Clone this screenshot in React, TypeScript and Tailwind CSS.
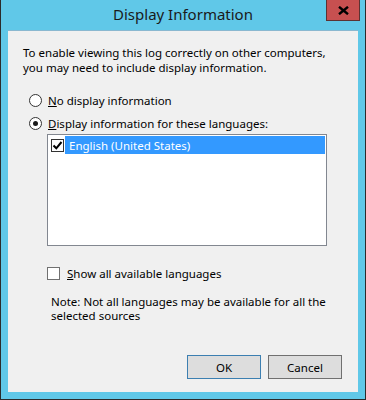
import { useState } from "react";

const font = { fontFamily: '"Noto Sans", "Open Sans", sans-serif' };

const Radio = ({ checked }: { checked: boolean }) => (
  <span className="w-[13px] h-[13px] rounded-full border border-[#333333] bg-white flex items-center justify-center shrink-0">
    {checked && <span className="w-[5px] h-[5px] rounded-full bg-[#1a1a1a]" />}
  </span>
);

const Check = ({ checked }: { checked: boolean }) => (
  <span className="w-[13px] h-[13px] border border-[#333333] bg-white flex items-center justify-center shrink-0">
    {checked && (
      <svg width="11" height="11" viewBox="0 0 11 11">
        <path d="M1.5 5.5 L4.3 8.3 L9.5 2" fill="none" stroke="#000" strokeWidth="2" />
      </svg>
    )}
  </span>
);

export default function App() {
  const [mode, setMode] = useState<"none" | "langs">("langs");
  const [showAll, setShowAll] = useState(false);
  const [english, setEnglish] = useState(true);

  return (
    <div
      className="w-[366px] h-[400px] bg-[#60c8e8] border-x border-b border-[#2b2b2b] flex flex-col text-[11.5px] text-black"
      style={font}
    >
      {/* Title bar */}
      <div className="relative h-[30px] flex items-center justify-center shrink-0">
        <span className="text-[15px] text-[#1a1a1a] -mt-[1px]">Display Information</span>
        <button className="absolute right-[5px] top-0 w-[34px] h-[21px] bg-[#c75050] border border-t-0 border-[#5c3232] flex items-center justify-center">
          <svg width="11" height="9" viewBox="0 0 11 9">
            <path d="M1 0.8 L10 8.2 M10 0.8 L1 8.2" stroke="#000" strokeWidth="2.4" />
          </svg>
        </button>
      </div>

      {/* Client area */}
      <div className="flex-1 mx-[7px] mb-[7px] bg-[#f0f0f0] border-t border-[#8ab8d0] flex flex-col pl-[15px] pt-[14px] leading-[15px]">
        <p>
          To enable viewing this log correctly on other computers,
          <br />
          you may need to include display information.
        </p>

        <div className="mt-[18px] ml-[6px] flex flex-col gap-[9px]">
          <label className="flex items-center gap-[6px] h-[14px]" onClick={() => setMode("none")}>
            <Radio checked={mode === "none"} />
            <span>
              <span className="underline">N</span>o display information
            </span>
          </label>
          <label className="flex items-center gap-[6px] h-[14px]" onClick={() => setMode("langs")}>
            <Radio checked={mode === "langs"} />
            <span>
              <span className="underline">D</span>isplay information for these languages:
            </span>
          </label>
        </div>

        <div className="mt-[4px] ml-[24px] w-[280px] h-[112px] border border-[#828790] bg-white p-[1px] shrink-0">
          <div className="flex items-center h-[18px]" onClick={() => setEnglish(!english)}>
            <span className="ml-[2px]">
              <Check checked={english} />
            </span>
            <span className="ml-[1px] flex-1 h-full bg-[#3399ff] text-white flex items-center pl-[4px]">
              English (United States)
            </span>
          </div>
        </div>

        <label className="mt-[21px] ml-[24px] flex items-center gap-[7px] h-[13px]" onClick={() => setShowAll(!showAll)}>
          <span className="w-[13px] h-[13px] border border-[#707070] bg-white shrink-0">
            {showAll && <Check checked />}
          </span>
          <span>
            <span className="underline">S</span>how all available languages
          </span>
        </label>

        <p className="mt-[15px] ml-[28px] leading-[14px]">
          Note: Not all languages may be available for all the
          <br />
          selected sources
        </p>

        <div className="mt-auto mb-[13px] mr-[16px] flex justify-end gap-[7px]">
          <button className="w-[74px] h-[24px] bg-[#dddddd] border border-[#3c7fb1]">OK</button>
          <button className="w-[74px] h-[24px] bg-[#dddddd] border border-[#707070]">Cancel</button>
        </div>
      </div>
    </div>
  );
}
